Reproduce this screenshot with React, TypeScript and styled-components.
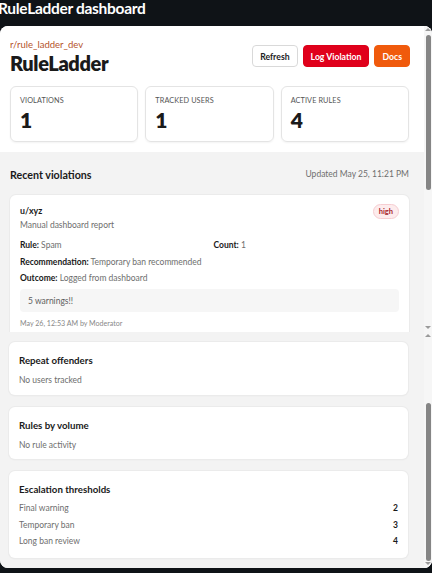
import styled, { createGlobalStyle } from 'styled-components';

const GlobalStyle = createGlobalStyle`
  html, body {
    margin: 0;
    padding: 0;
    height: 100%;
    background: #0f1317;
    overflow: hidden;
  }
  body {
    font-family: Lato, "Open Sans", "Liberation Sans", sans-serif;
    color: #1a1a1a;
  }
  #root {
    height: 100%;
  }
`;

const Shell = styled.div`
  display: flex;
  flex-direction: column;
  height: 573px;
`;

const TitleBar = styled.h1`
  margin: -2px 0 0 -2px;
  height: 28px;
  font-size: 15.5px;
  font-weight: 700;
  line-height: 20px;
  letter-spacing: -0.3px;
  color: #ffffff;
  white-space: nowrap;
`;

const Window = styled.div`
  flex: 1;
  display: flex;
  flex-direction: column;
  margin-bottom: 5px;
  background: #ffffff;
  border-radius: 8px;
  overflow: hidden;
`;

const Pane = styled.div<{ $fill?: boolean }>`
  display: flex;
  ${({ $fill }) => ($fill ? 'flex: 1; min-height: 0;' : 'height: 306px; flex: none;')}
  background: ${({ $fill }) => ($fill ? '#f3f3f3' : '#ffffff')};
`;

const PaneBody = styled.div<{ $bottom?: boolean }>`
  flex: 1;
  min-width: 0;
  overflow: hidden;
  display: flex;
  flex-direction: column;
  justify-content: ${({ $bottom }) => ($bottom ? 'flex-end' : 'flex-start')};
`;

const ScrollTrack = styled.div`
  flex: none;
  width: 8px;
  display: flex;
  flex-direction: column;
  align-items: center;
  padding: 2px 0 3px;
  background: #f6f6f6;
`;

const Arrow = styled.div<{ $dir: 'up' | 'down' }>`
  width: 0;
  height: 0;
  border-left: 3px solid transparent;
  border-right: 3px solid transparent;
  ${({ $dir }) =>
    $dir === 'up' ? 'border-bottom: 3px solid #9a9a9a;' : 'border-top: 3px solid #9a9a9a;'}
`;

const Thumb = styled.div<{ $offset: number; $size: number }>`
  width: 5px;
  margin-top: ${({ $offset }) => $offset}px;
  height: ${({ $size }) => $size}px;
  border-radius: 3px;
  background: #858585;
`;

const TrackRest = styled.div`
  flex: 1;
`;

function ScrollBar({ offset, size }: { offset: number; size: number }) {
  return (
    <ScrollTrack>
      <Arrow $dir="up" />
      <Thumb $offset={offset} $size={size} />
      <TrackRest />
      <Arrow $dir="down" />
    </ScrollTrack>
  );
}

const Header = styled.header`
  display: flex;
  justify-content: space-between;
  align-items: flex-start;
  padding: 12px 14px 0 10px;
`;

const Sub = styled.div`
  font-size: 9.5px;
  color: #b5532b;
  line-height: 14px;
`;

const BrandTitle = styled.h2`
  margin: -2px 0 0;
  font-size: 20px;
  font-weight: 800;
  line-height: 26px;
  letter-spacing: -0.4px;
`;

const Actions = styled.div`
  display: flex;
  gap: 5px;
  margin-top: 7px;
`;

const Button = styled.button<{ $variant: 'plain' | 'danger' | 'accent' }>`
  height: 22px;
  padding: 0 7px;
  border-radius: 4px;
  font-family: inherit;
  font-size: 8.7px;
  font-weight: 700;
  cursor: pointer;
  border: 1px solid
    ${({ $variant }) =>
      $variant === 'plain' ? '#d9d9d9' : $variant === 'danger' ? '#dc0018' : '#f05a0c'};
  background: ${({ $variant }) =>
    $variant === 'plain' ? '#ffffff' : $variant === 'danger' ? '#e0001b' : '#f05a0c'};
  color: ${({ $variant }) => ($variant === 'plain' ? '#222' : '#ffffff')};
`;

const Stats = styled.div`
  display: grid;
  grid-template-columns: repeat(3, 1fr);
  gap: 7px;
  padding: 10px 15px 10px 10px;
`;

const StatCard = styled.div`
  height: 56px;
  box-sizing: border-box;
  padding: 9px 9px;
  border: 1px solid #e4e4e4;
  border-radius: 6px;
  box-shadow: 0 1px 2px rgba(0, 0, 0, 0.05);
`;

const StatLabel = styled.div`
  font-size: 7.3px;
  letter-spacing: 0.1px;
  color: #555;
  text-transform: uppercase;
  line-height: 10px;
`;

const StatValue = styled.div`
  margin-top: 2px;
  font-size: 21px;
  font-weight: 800;
  line-height: 24px;
`;

const Section = styled.section`
  flex: 1;
  background: #f3f3f3;
  padding: 14px 15px 10px 10px;
`;

const SectionHead = styled.div`
  display: flex;
  justify-content: space-between;
  align-items: center;
  height: 16px;
`;

const SectionTitle = styled.h3`
  margin: 0;
  font-size: 10.7px;
  font-weight: 700;
`;

const Muted = styled.span`
  font-size: 8.5px;
  color: #6e6e6e;
`;

const Card = styled.div`
  background: #ffffff;
  border-radius: 6px;
  box-shadow: 0 0 0 1px #ebebeb, 0 1px 2px rgba(0, 0, 0, 0.05);
`;

const ViolationCard = styled(Card)`
  flex: none;
  margin-top: 13px;
  padding: 9px 10px 10px;
`;

const TopRow = styled.div`
  display: flex;
  justify-content: space-between;
  align-items: flex-start;
`;

const User = styled.div`
  font-size: 8.8px;
  font-weight: 700;
  line-height: 14px;
`;

const Desc = styled.div`
  font-size: 8.5px;
  color: #6e6e6e;
  line-height: 14px;
`;

const Badge = styled.span`
  padding: 1px 5px;
  border-radius: 8px;
  background: #fdeced;
  border: 1px solid #f6cdd1;
  color: #a8262c;
  font-size: 7.5px;
  font-weight: 700;
  line-height: 11px;
`;

const DetailGrid = styled.div`
  display: grid;
  grid-template-columns: 1fr 1fr;
  column-gap: 8px;
  row-gap: 2.5px;
  margin-top: 6px;
`;

const Detail = styled.div<{ $wide?: boolean }>`
  grid-column: ${({ $wide }) => ($wide ? '1 / -1' : 'auto')};
  font-size: 8.5px;
  line-height: 14px;
  color: #6e6e6e;

  b {
    color: #1a1a1a;
    font-weight: 700;
  }
`;

const Note = styled.div`
  margin-top: 4px;
  padding: 5.5px 8px;
  background: #f6f6f6;
  border-radius: 4px;
  font-size: 8.5px;
  line-height: 12px;
  color: #5e5e5e;
`;

const Footer = styled.div`
  margin-top: 7px;
  font-size: 7.1px;
  line-height: 10px;
  color: #888;
`;

const Sidebar = styled.div`
  display: flex;
  flex-direction: column;
  gap: 12px;
  padding: 0 16px 10px 9px;
`;

const SideCard = styled(Card)`
  padding: 11px 10px 8.5px;
`;

const SideTitle = styled.h3<{ $gap: number }>`
  margin: 0 0 ${({ $gap }) => $gap}px;
  font-size: 9.7px;
  font-weight: 700;
  line-height: 14px;
`;

const SideText = styled.div`
  font-size: 8.5px;
  line-height: 12px;
  color: #6e6e6e;
`;

const ThresholdRow = styled.div`
  display: flex;
  justify-content: space-between;
  font-size: 8.5px;
  line-height: 16.5px;
  color: #6e6e6e;

  b {
    color: #1a1a1a;
    font-weight: 700;
  }
`;

const thresholds = [
  { label: 'Final warning', value: 2 },
  { label: 'Temporary ban', value: 3 },
  { label: 'Long ban review', value: 4 },
];

export default function App() {
  return (
    <Shell>
      <GlobalStyle />
      <TitleBar>RuleLadder dashboard</TitleBar>
      <Window>
        <Pane>
          <PaneBody>
            <Header>
              <div>
                <Sub>r/rule_ladder_dev</Sub>
                <BrandTitle>RuleLadder</BrandTitle>
              </div>
              <Actions>
                <Button $variant="plain">Refresh</Button>
                <Button $variant="danger">Log Violation</Button>
                <Button $variant="accent">Docs</Button>
              </Actions>
            </Header>
            <Stats>
              <StatCard>
                <StatLabel>Violations</StatLabel>
                <StatValue>1</StatValue>
              </StatCard>
              <StatCard>
                <StatLabel>Tracked users</StatLabel>
                <StatValue>1</StatValue>
              </StatCard>
              <StatCard>
                <StatLabel>Active rules</StatLabel>
                <StatValue>4</StatValue>
              </StatCard>
            </Stats>
            <Section>
              <SectionHead>
                <SectionTitle>Recent violations</SectionTitle>
                <Muted>Updated May 25, 11:21 PM</Muted>
              </SectionHead>
              <ViolationCard>
                <TopRow>
                  <div>
                    <User>u/xyz</User>
                    <Desc>Manual dashboard report</Desc>
                  </div>
                  <Badge>high</Badge>
                </TopRow>
                <DetailGrid>
                  <Detail>
                    <b>Rule:</b> Spam
                  </Detail>
                  <Detail>
                    <b>Count:</b> 1
                  </Detail>
                  <Detail $wide>
                    <b>Recommendation:</b> Temporary ban recommended
                  </Detail>
                  <Detail $wide>
                    <b>Outcome:</b> Logged from dashboard
                  </Detail>
                </DetailGrid>
                <Note>5 warnings!!</Note>
                <Footer>May 26, 12:53 AM by Moderator</Footer>
              </ViolationCard>
            </Section>
          </PaneBody>
          <ScrollBar offset={4} size={155} />
        </Pane>
        <Pane $fill>
          <PaneBody $bottom>
            <Sidebar>
              <SideCard>
                <SideTitle $gap={7}>Repeat offenders</SideTitle>
                <SideText>No users tracked</SideText>
              </SideCard>
              <SideCard>
                <SideTitle $gap={7}>Rules by volume</SideTitle>
                <SideText>No rule activity</SideText>
              </SideCard>
              <SideCard>
                <SideTitle $gap={4}>Escalation thresholds</SideTitle>
                {thresholds.map((t) => (
                  <ThresholdRow key={t.label}>
                    <span>{t.label}</span>
                    <b>{t.value}</b>
                  </ThresholdRow>
                ))}
              </SideCard>
            </Sidebar>
          </PaneBody>
          <ScrollBar offset={66} size={158} />
        </Pane>
      </Window>
    </Shell>
  );
}
